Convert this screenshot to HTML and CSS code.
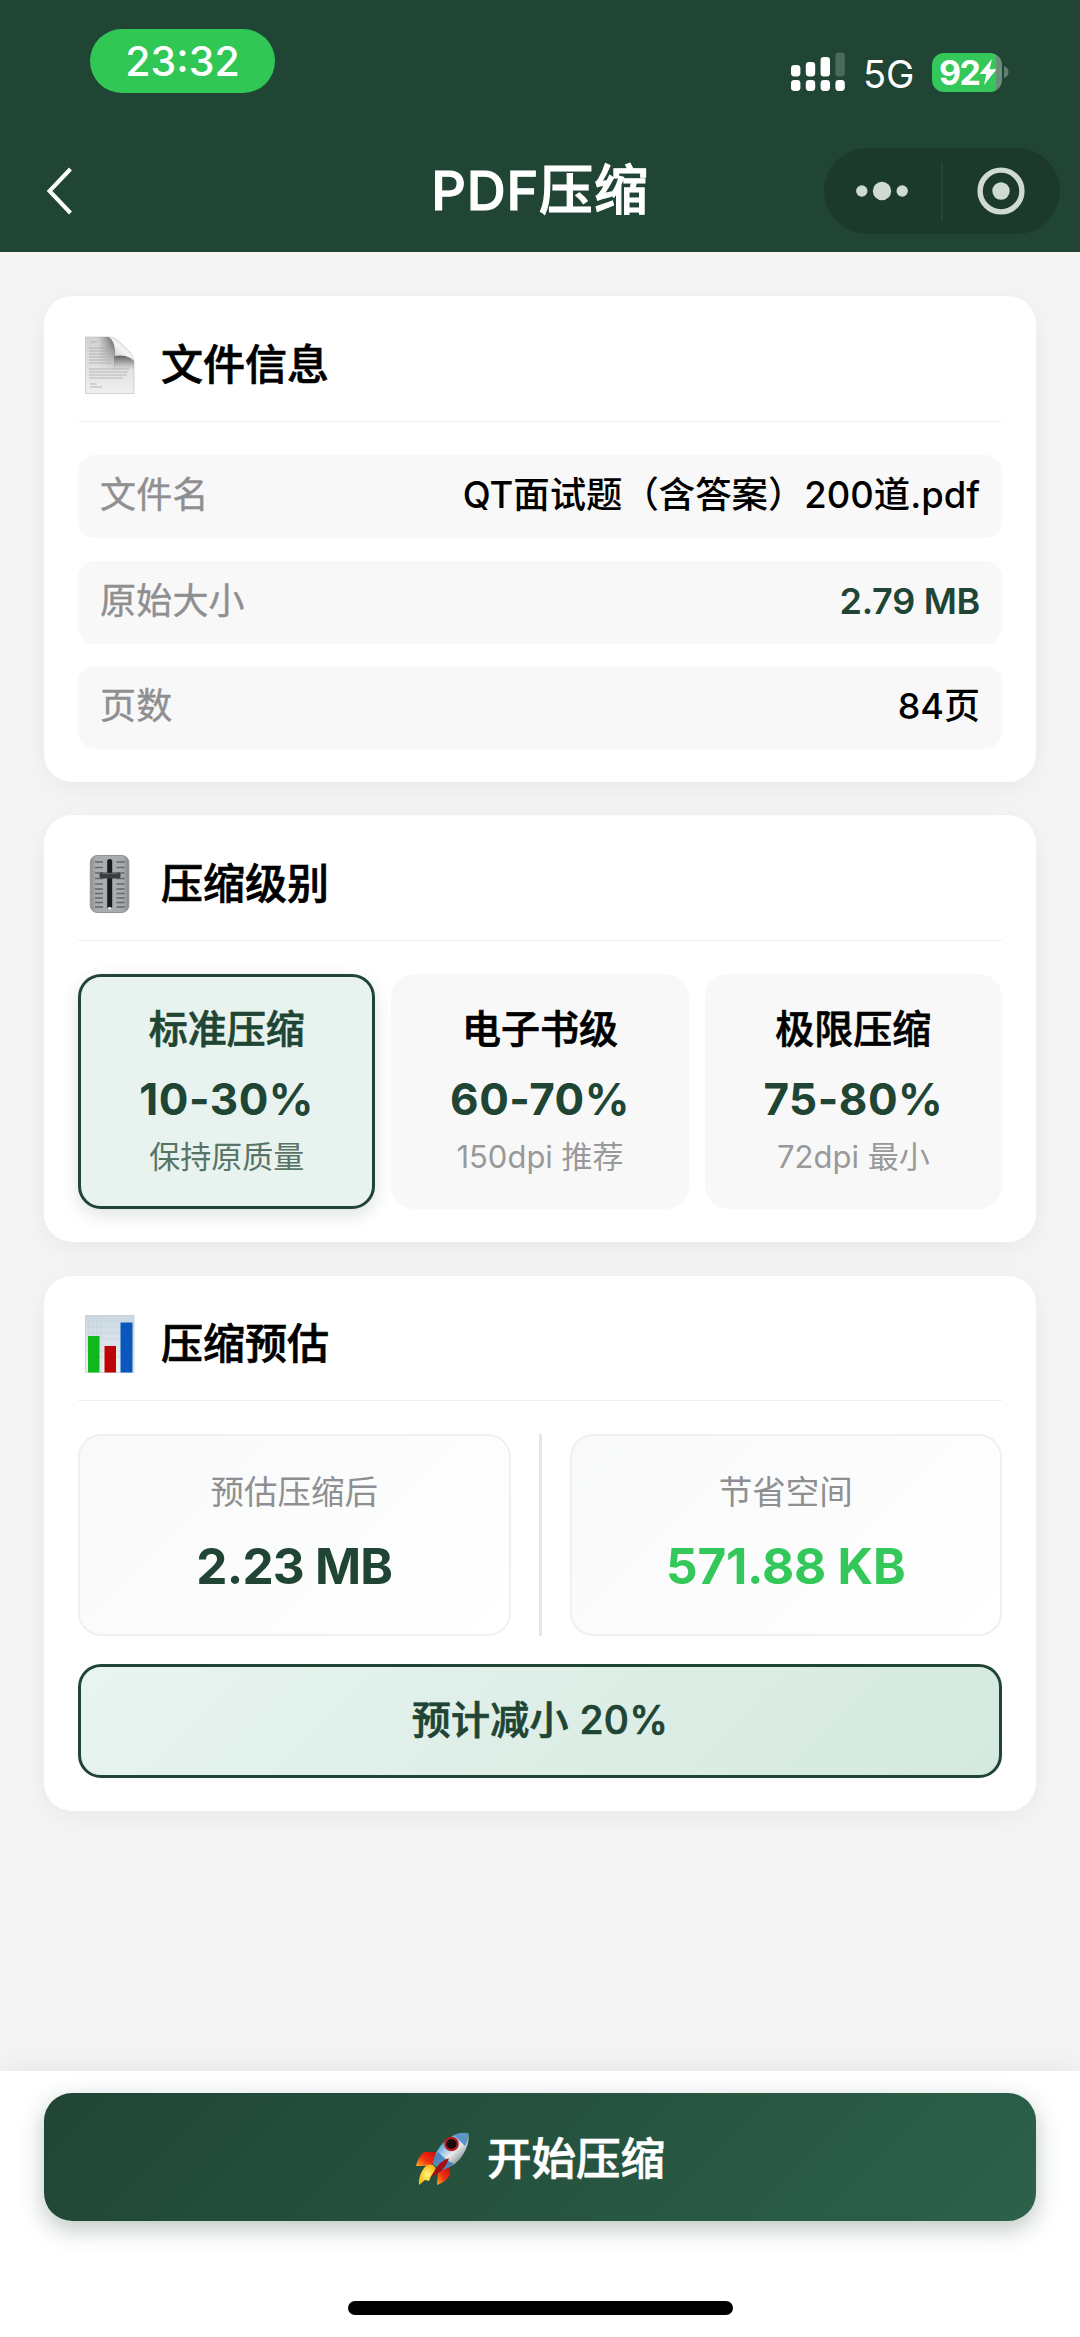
FILE: index.html
```html
<!DOCTYPE html>
<html lang="zh-CN">
<head>
<meta charset="utf-8">
<title>PDF压缩</title>
<link rel="stylesheet" href="styles.css">
</head>
<body>
<div class="screen">
  <header class="top">
    <div class="status">
      <span class="clock">23:32</span>
      <div class="status-right">
        <svg class="signal" width="54" height="40" viewBox="0 0 54 40" fill="#fff">
          <rect x="0" y="13" width="9.4" height="11.5" rx="3.4"/><rect x="14.8" y="10" width="9.4" height="14.5" rx="3.4"/><rect x="29.6" y="5" width="9.4" height="19.5" rx="3.2"/><rect x="44.4" y="0.5" width="9.4" height="24" rx="3.2" opacity=".2"/>
          <rect x="0" y="28" width="9.4" height="11" rx="3.4"/><rect x="14.8" y="28" width="9.4" height="11" rx="3.4"/><rect x="29.6" y="28" width="9.4" height="11" rx="3.4"/><rect x="44.4" y="28" width="9.4" height="11" rx="3.4"/>
        </svg>
        <span class="network">5G</span>
        <span class="battery"><span class="percent">92</span><svg width="18" height="28" viewBox="0 0 18 28"><path d="M13 1 0.6 16h6.6L5 27 17.6 11.200h-7z" fill="#fff"/></svg></span>
        <svg class="nub" width="5" height="14" viewBox="0 0 5 14"><path d="M0 1c6 2 6 10 0 12z" fill="#5f8070"/></svg>
      </div>
    </div>
    <nav class="nav">
      <svg class="back" width="30" height="50" viewBox="0 0 30 50"><path d="M24.500 3 3.500 25l21 22" fill="none" stroke="#fff" stroke-width="4"/></svg>
      <h1 class="title">PDF压缩</h1>
      <div class="capsule">
        <svg width="52" height="20" viewBox="0 0 52 20" fill="#cfdad3"><circle cx="5.800" cy="10" r="5.700"/><circle cx="26" cy="10" r="9.200"/><circle cx="46.200" cy="10" r="5.700"/></svg>
        <span class="bar"></span>
        <svg width="48" height="48" viewBox="0 0 48 48"><circle cx="24" cy="24" r="20.900" fill="none" stroke="#cfdad3" stroke-width="5.400"/><circle cx="24" cy="24" r="8.700" fill="#cfdad3"/></svg>
      </div>
    </nav>
  </header>

  <main class="content">
    <section class="card">
      <div class="card-head">
        <svg class="icon" width="58" height="60" viewBox="0 0 58 60">
          <defs>
            <linearGradient id="paper" x1="0" y1="0" x2="0" y2="1"><stop offset="0" stop-color="#d2d2d2"/><stop offset="1" stop-color="#efefef"/></linearGradient>
            <linearGradient id="shade" x1="0" y1="0" x2="1" y2="0"><stop offset="0" stop-color="#666" stop-opacity="0"/><stop offset="1" stop-color="#555"/></linearGradient>
            <linearGradient id="fade" x1="0" y1="0" x2="0" y2="1"><stop offset="0" stop-color="#fff"/><stop offset="1" stop-color="#000"/></linearGradient>
            <mask id="shade-mask"><rect width="58" height="36" fill="url(#fade)"/></mask>
            <linearGradient id="under" x1="0" y1="0" x2="0" y2="1"><stop offset="0" stop-color="#555"/><stop offset="1" stop-color="#888" stop-opacity="0"/></linearGradient>
            <linearGradient id="curl" x1="0" y1="1" x2="1" y2="0"><stop offset="0" stop-color="#bbb"/><stop offset=".5" stop-color="#f5f5f5"/><stop offset="1" stop-color="#aaa"/></linearGradient>
          </defs>
          <path d="M7.500 2H32q7 1 12 7l7 7q5 5 5 11v31.500H7.500z" fill="url(#paper)" stroke="#c4c4c4" stroke-width=".7"/>
          <g mask="url(#shade-mask)"><path d="M20 2h11q6 3 6 10v24H20z" fill="url(#shade)"/></g>
          <path d="M36.500 20q14-1 19.500 6v9H36z" fill="url(#under)"/>
          <path d="M31 2q7 1 13 7l7 7q4 4 5 9-8-6-19-4 1-14-6-19z" fill="url(#curl)"/>
          <path d="M12 7h7M11 13h22M11 16h24M11 19h23M11 22h24M11 25h20M11 28h22M11 34h40M11 37h39M11 40h38M11 43h34M12 49h7M12 52h12" stroke="#aaa" stroke-width=".8"/>
        </svg>
        <h2>文件信息</h2>
      </div>
      <dl class="rows">
        <div class="row"><dt>文件名</dt><dd class="name">QT面试题（含答案）200道.pdf</dd></div>
        <div class="row"><dt>原始大小</dt><dd class="size">2.79 MB</dd></div>
        <div class="row"><dt>页数</dt><dd>84页</dd></div>
      </dl>
    </section>

    <section class="card">
      <div class="card-head">
        <svg class="icon" width="58" height="60" viewBox="0 0 58 60">
          <defs><linearGradient id="metal"><stop offset="0" stop-color="#8c9093"/><stop offset=".15" stop-color="#abaeb1"/><stop offset=".85" stop-color="#a8abae"/><stop offset="1" stop-color="#85898c"/></linearGradient></defs>
          <rect x="12.300" y="1.500" width="38.500" height="57" rx="7" fill="url(#metal)" stroke="#8e9295"/>
          <path d="M17 8h8M17 13.500h8M17 19h8M17 24.500h8M17 30h8M17 35h8M17 39.500h8M17 44h8M17 48.500h8M17 53h8M38.500 8h8M38.500 13.500h8M38.500 19h8M38.500 24.500h8M38.500 30h8M38.500 35h8M38.500 39.500h8M38.500 44h8M38.500 48.500h8M38.500 53h8" stroke="#62676a" stroke-width="1.300"/>
          <rect x="29.200" y="5" width="5" height="50" rx="2.500" fill="#181b1d"/>
          <rect x="30" y="53" width="3.500" height="2.500" rx="1.200" fill="#e8eaeb"/>
          <rect x="21.500" y="18.500" width="21" height="6" rx="2" fill="#393d40"/>
          <path d="M24 19.500h16" stroke="#60656a" stroke-width="1"/>
        </svg>
        <h2>压缩级别</h2>
      </div>
      <div class="levels">
        <div class="level selected"><h3>标准压缩</h3><strong>10-30%</strong><p>保持原质量</p></div>
        <div class="level"><h3>电子书级</h3><strong>60-70%</strong><p>150dpi 推荐</p></div>
        <div class="level"><h3>极限压缩</h3><strong>75-80%</strong><p>72dpi 最小</p></div>
      </div>
    </section>

    <section class="card estimate">
      <div class="card-head">
        <svg class="icon" width="58" height="60" viewBox="0 0 58 60">
          <defs><linearGradient id="chart" x1="0" y1="0" x2="0" y2="1"><stop offset="0" stop-color="#cbd8e2"/><stop offset="1" stop-color="#eef2f5"/></linearGradient></defs>
          <rect x="7.500" y="1.500" width="48.500" height="57" fill="url(#chart)" stroke="#bac7d0" stroke-width=".6"/>
          <path d="M8 7h47M8 13h47M8 19h47M8 25h47M8 31h47M8 37h47M8 43h47M11 2v56M15 2v56M19 2v56M23 2v56" stroke="#bdcad4" stroke-width=".4"/>
          <rect x="10" y="22" width="11.500" height="36.500" fill="#0fb81c"/><rect x="26.500" y="32" width="11.500" height="26.500" fill="#bd0505"/><rect x="42.500" y="8.500" width="12" height="50" fill="#0a57bd"/>
        </svg>
        <h2>压缩预估</h2>
      </div>
      <div class="stats">
        <div class="stat"><p>预估压缩后</p><strong>2.23 MB</strong></div>
        <span class="stats-line"></span>
        <div class="stat saved"><p>节省空间</p><strong>571.88 KB</strong></div>
      </div>
      <div class="reduction">预计减小 20%</div>
    </section>
  </main>

  <footer class="bottom">
    <button class="start">
      <svg width="54" height="54" viewBox="0 0 54 54">
        <defs>
          <linearGradient id="body" x1=".2" y1=".2" x2=".75" y2=".8"><stop offset="0" stop-color="#3b86cb"/><stop offset=".35" stop-color="#9dc8e8"/><stop offset=".6" stop-color="#e8eaeb"/><stop offset="1" stop-color="#8a9298"/></linearGradient>
          <linearGradient id="fin" x1="1" y1="0" x2="0" y2="1"><stop offset="0" stop-color="#c90b08"/><stop offset=".55" stop-color="#f03012"/><stop offset="1" stop-color="#ffb11c"/></linearGradient>
          <radialGradient id="flame"><stop offset="0" stop-color="#fff67a"/><stop offset="1" stop-color="#f7b91b"/></radialGradient>
        </defs>
        <path d="M22 20H9Q3 25 1 34l12 0 8-4z" fill="url(#fin)"/>
        <path d="M35 34v9Q31 50 22 53l1-12z" fill="url(#fin)"/>
        <path d="M9 36q4-5 9-3 5 3 1 8-4 4-5 8l-4-1-6 5q-1-9 5-17z" fill="url(#flame)"/>
        <path d="M53 1Q39 0 29 10q-9 8-11 22l9 6q15-4 22-17Q55 10 53 1z" fill="url(#body)"/>
        <path d="M53 1q-8-1-14 2l11 11q4-6 3-13z" fill="#5d93c5"/>
        <path d="M23 20q-5 5-5 12l9 6q7-2 12-6-8-4-16-12z" fill="#2d6eb1" opacity=".75"/>
        <path d="M34 26q-9 3-14 12l-5 8 8-5q8-5 11-15z" fill="#a30d16"/>
        <circle cx="36.500" cy="12" r="6.200" fill="#160b0b" stroke="#b51a20" stroke-width="2.200"/>
      </svg>
      <span>开始压缩</span>
    </button>
    <div class="home"></div>
  </footer>
</div>
</body>
</html>
```
FILE: styles.css
```css
* { box-sizing: border-box; margin: 0; padding: 0; }
body { background: #f5f5f5; font-family: Inter, "Noto Sans CJK SC", sans-serif; color: #000; }
svg { display: block; flex: none; }
.screen { width: 1080px; height: 2337px; display: flex; flex-direction: column; overflow: hidden; }

.top { height: 252px; background: #204534; color: #fff; }
.status { height: 128px; padding: 29px 73px 0 90px; display: flex; justify-content: space-between; align-items: flex-start; }
.clock { width: 185px; height: 64px; border-radius: 32px; background: #30c755; font-size: 41px; font-weight: 500; line-height: 65px; text-align: center; }
.status-right { display: flex; align-items: center; padding-top: 23px; height: 63px; }
.network { margin-left: 18px; width: 69px; font-size: 38px; line-height: 40px; padding-top: 4px; }
.battery { width: 70px; height: 39px; border-radius: 12px; background: linear-gradient(90deg, #34c759 64px, #6a8c79 64px); display: flex; align-items: center; padding-left: 7px; }
.percent { font-size: 34px; font-weight: 700; line-height: 39px; width: 40px; letter-spacing: -1.5px; }
.nub { margin-left: 2px; margin-right: -2px; }
.nav { height: 124px; display: grid; grid-template-columns: 236px 1fr 236px; align-items: center; padding: 2px 20px 0 20px; }
.back { margin-left: 26px; }
.title { font-size: 54px; font-weight: 500; line-height: 76px; text-align: center; white-space: nowrap; letter-spacing: .8px; -webkit-text-stroke: 1.1px currentColor; }
.capsule { height: 86px; border-radius: 43px; background: #1c3a2b; display: flex; align-items: center; padding-left: 32px; }
.bar { width: 2px; height: 57px; margin: 0 34px 0 33px; background: #264637; }

.content { flex: 1; padding: 44px 44px 0; display: flex; flex-direction: column; gap: 33px; }
.card { background: #fff; border-radius: 28px; padding: 34px 34px 33px; box-shadow: 0 6px 29px rgba(0, 0, 0, .06); }
.card-head { height: 92px; padding-bottom: 22px; margin-bottom: 33px; border-bottom: 1px solid #f0f0f0; display: flex; align-items: center; gap: 25px; }
.card-head h2 { font-size: 42px; font-weight: 500; line-height: 60px; -webkit-text-stroke: .7px currentColor; }
.rows { display: flex; flex-direction: column; gap: 22.5px; }
.row { height: 83px; border-radius: 17px; background: #f8f8f8; padding: 0 22px 3px; display: flex; align-items: center; justify-content: space-between; font-size: 36px; line-height: 50px; }
.row dt { color: #8f8f91; letter-spacing: .2px; -webkit-text-stroke: .4px currentColor; }
.row dd { font-weight: 500; }
.row .name { font-size: 36.400px; }
.row .size { color: #204534; font-weight: 600; letter-spacing: -.3px; }

.levels { display: grid; grid-template-columns: repeat(3, 1fr); gap: 16px; }
.level { height: 235px; border-radius: 23px; background: #f8f8f8; border: 3px solid #f8f8f8; padding-top: 25px; text-align: center; }
.level h3 { font-size: 39px; font-weight: 500; line-height: 54px; -webkit-text-stroke: .7px currentColor; }
.level strong { display: block; margin-top: 16px; font-size: 44px; font-weight: 700; line-height: 54px; letter-spacing: .5px; color: #204534; }
.level p { margin-top: 10px; font-size: 31px; line-height: 42px; color: #999; }
.level.selected { border-color: #204534; background: #e8f3ef; box-shadow: 0 6px 17px rgba(32, 69, 52, .15); }
.selected h3 { color: #204534; }
.selected p { color: #587467; }

.estimate { margin-top: 1px; }
.estimate .card-head { height: 91px; }
.stats { height: 202px; display: flex; align-items: stretch; gap: 28px; }
.stat { flex: 1; border: 2px solid #f0f0f0; border-radius: 23px; background: linear-gradient(135deg, #f8f9fa, #fff); text-align: center; padding-top: 33px; }
.stat p { font-size: 33.500px; line-height: 46px; color: #8f8f91; }
.stat strong { display: block; margin-top: 22px; font-size: 49.500px; font-weight: 700; line-height: 58px; letter-spacing: -.8px; color: #204534; }
.stat.saved strong { color: #34c759; letter-spacing: -.2px; }
.stats-line { width: 3px; background: #e6e6e6; }
.reduction { margin-top: 28px; height: 113.500px; border: 3px solid #204534; border-radius: 23px; background: linear-gradient(135deg, #e8f4f0, #d4e9df); color: #204534; font-size: 39px; font-weight: 500; line-height: 106px; text-align: center; letter-spacing: .3px; -webkit-text-stroke: .7px currentColor; }

.bottom { height: 266px; background: #fff; box-shadow: 0 -6px 29px rgba(0, 0, 0, .06); padding: 22px 44px 0; }
.start { width: 100%; height: 128px; border: 0; border-radius: 28px; background: linear-gradient(135deg, #204534, #2c614a); box-shadow: 0 8px 23px rgba(32, 69, 52, .3); color: #fff; font: 500 44.500px/64px Inter, "Noto Sans CJK SC", sans-serif; -webkit-text-stroke: .7px currentColor; display: flex; align-items: center; justify-content: center; gap: 18px; padding-top: 3px; }
.home { width: 385px; height: 14px; border-radius: 7px; background: #000; margin: 80px auto 0; }
```
